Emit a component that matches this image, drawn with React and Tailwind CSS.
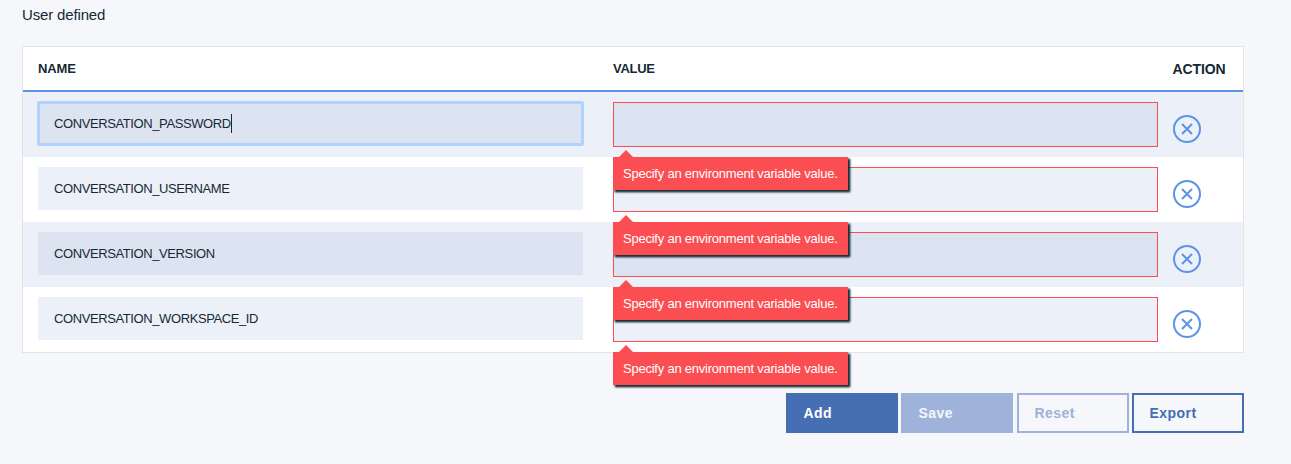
const rows = [
  { name: "CONVERSATION_PASSWORD", focused: true },
  { name: "CONVERSATION_USERNAME" },
  { name: "CONVERSATION_VERSION" },
  { name: "CONVERSATION_WORKSPACE_ID" },
];

const columns = "grid grid-cols-[545px_545px_1fr] gap-x-[30px] pl-[15px]";

function RemoveIcon() {
  return (
    <svg width="28" height="28" viewBox="0 0 28 28" fill="none" stroke="#5a94e8" strokeWidth="2">
      <circle cx="14" cy="14" r="13" />
      <path d="M9 9 19 19M19 9 9 19" />
    </svg>
  );
}

function ErrorTip() {
  return (
    <div className="absolute -left-px top-[54px] z-10 h-[33px] w-[235px] bg-[#fa4e52] pl-[10px] text-[13px] leading-[33px] tracking-[-0.23px] whitespace-nowrap text-white shadow-[2px_2px_2px_#152934,2px_2px_2px_#15293480]">
      <svg className="absolute -top-[7px] left-[6px]" width="14" height="7" viewBox="0 0 14 7" fill="#fa4e52">
        <path d="M0 7 7 0l7 7z" />
      </svg>
      Specify an environment variable value.
    </div>
  );
}

function Row({ row, shaded }) {
  const field = shaded ? "bg-[#dde4f1]" : "bg-[#ecf1f9]";
  return (
    <div className={`${columns} h-[65px] items-start pt-[10px] ${shaded ? "bg-[#ecf1f9]" : "bg-white"}`}>
      <div
        className={`flex h-[43px] items-center pl-4 text-[13px] ${field} ${
          row.focused ? "rounded-[1px] shadow-[0_0_0_1px_#b0d2fb,inset_0_0_0_2px_#b0d2fb]" : ""
        }`}
      >
        <span className="tracking-[-0.4px]">{row.name}</span>
        {row.focused && <span className="h-[19px] w-px bg-[#152934]" />}
      </div>
      <div className={`relative h-[45px] border border-[#fa4e52] ${field}`}>
        <ErrorTip />
      </div>
      <button type="button" aria-label="Remove" className="mt-[13px] -ml-[15px] h-7 w-7">
        <RemoveIcon />
      </button>
    </div>
  );
}

function Button({ children, className }) {
  return (
    <button type="button" className={`h-10 w-28 border-2 pl-[15.5px] text-left text-[14px] font-bold tracking-[0.45px] ${className}`}>
      {children}
    </button>
  );
}

export default function App() {
  return (
    <div className="h-[464px] overflow-hidden bg-[#f5f7fb] pl-[22px] pr-[47px] pt-[5px] font-['Liberation_Sans',sans-serif] text-[#152934]">
      <h2 className="h-[41px] text-[15px] leading-[20px] tracking-[-0.15px]">User defined</h2>
      <div className="border border-[#dfe6eb] bg-white">
        <div className={`${columns} h-[45px] items-center border-b-2 border-[#5a94e8] text-[13px] font-bold`}>
          <span className="tracking-[-0.1px]">NAME</span>
          <span className="tracking-[-0.3px]">VALUE</span>
          <span className="-ml-[15.5px] pt-px text-[14px] tracking-[-0.1px]">ACTION</span>
        </div>
        {rows.map((row, i) => (
          <Row key={row.name} row={row} shaded={i % 2 === 0} />
        ))}
      </div>
      <div className="mt-10 flex justify-end gap-[3px]">
        <Button className="border-[#456eb3] bg-[#456eb3] text-white">Add</Button>
        <Button className="mr-px border-[#9fb2d9] bg-[#9fb2d9] text-[#f5f7fb]">Save</Button>
        <Button className="border-[#9fb2d9] text-[#9fb2d9]">Reset</Button>
        <Button className="border-[#456eb3] text-[#456eb3]">Export</Button>
      </div>
    </div>
  );
}
